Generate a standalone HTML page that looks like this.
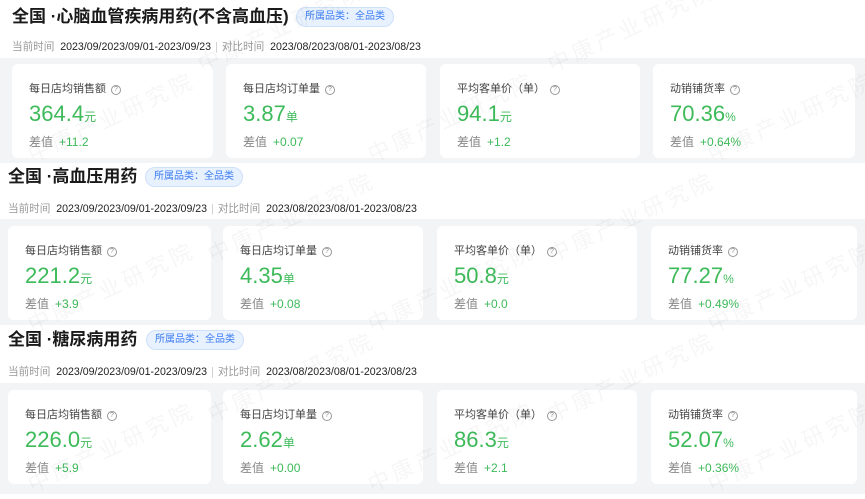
<!DOCTYPE html>
<html><head><meta charset="utf-8"><style>
*{margin:0;padding:0;box-sizing:border-box}
body{width:865px;height:494px;overflow:hidden;background:#fff;font-family:"Liberation Sans","Noto Sans CJK SC",sans-serif;position:relative}
.a{position:absolute;white-space:nowrap}
.title{font-size:17px;font-weight:bold;color:#1a1a1a;line-height:22px}
.badge{font-size:10px;color:#3b7cf0;background:#e8f1fe;border:1px solid #cfe0fb;border-radius:11px;height:20px;line-height:18px;padding:0 8px}
.date{font-size:10.6px;color:#222;line-height:14px}
.date span{color:#999}
.date i{font-style:normal;color:#ccc;margin:0 4px}
.gray{position:absolute;left:0;width:865px;background:#f3f4f6}
.card{position:absolute;background:#fff;border-radius:6px;height:94px}
.lab{position:absolute;left:17px;top:16px;font-size:11px;color:#444}
.q{display:inline-block;width:10px;height:10px;border:1px solid #999;border-radius:50%;font-size:7px;line-height:8px;text-align:center;color:#888;margin-left:5px;vertical-align:1px}
.val{position:absolute;left:17px;top:37px;font-size:22px;color:#3dba5a;line-height:26px}
.val small{font-size:12px}
.dif{position:absolute;left:17px;top:69px;font-size:12px;color:#888}
.dif b{font-weight:normal;color:#3dba5a;margin-left:6px}
.wm{position:absolute;font-size:22px;color:rgba(0,0,0,0.035);transform:rotate(-25deg);letter-spacing:4px;white-space:nowrap}
</style></head><body>

<div class="gray" style="top:58px;height:105px"></div>
<div class="gray" style="top:219px;height:106px"></div>
<div class="gray" style="top:383px;height:111px"></div>

<div class="a title" style="left:12px;top:6px">全国 ·心脑血管疾病用药(不含高血压)</div>
<div class="a badge" style="left:296px;top:7px">所属品类：全品类</div>
<div class="a date" style="left:12px;top:40px"><span>当前时间</span>&nbsp; 2023/09/2023/09/01-2023/09/23<i>|</i><span>对比时间</span>&nbsp; 2023/08/2023/08/01-2023/08/23</div>
<div class="card" style="left:12px;top:64px;width:201px"><div class="lab">每日店均销售额<span class="q">?</span></div><div class="val">364.4<small>元</small></div><div class="dif">差值<b>+11.2</b></div></div>
<div class="card" style="left:226px;top:64px;width:200px"><div class="lab">每日店均订单量<span class="q">?</span></div><div class="val">3.87<small>单</small></div><div class="dif">差值<b>+0.07</b></div></div>
<div class="card" style="left:440px;top:64px;width:200px"><div class="lab">平均客单价（单）<span class="q">?</span></div><div class="val">94.1<small>元</small></div><div class="dif">差值<b>+1.2</b></div></div>
<div class="card" style="left:653px;top:64px;width:202px"><div class="lab">动销铺货率<span class="q">?</span></div><div class="val">70.36<small>%</small></div><div class="dif">差值<b>+0.64%</b></div></div>

<div class="a title" style="left:8px;top:166px">全国 ·高血压用药</div>
<div class="a badge" style="left:145px;top:167px">所属品类：全品类</div>
<div class="a date" style="left:8px;top:202px"><span>当前时间</span>&nbsp; 2023/09/2023/09/01-2023/09/23<i>|</i><span>对比时间</span>&nbsp; 2023/08/2023/08/01-2023/08/23</div>
<div class="card" style="left:8px;top:226px;width:203px"><div class="lab">每日店均销售额<span class="q">?</span></div><div class="val">221.2<small>元</small></div><div class="dif">差值<b>+3.9</b></div></div>
<div class="card" style="left:223px;top:226px;width:200px"><div class="lab">每日店均订单量<span class="q">?</span></div><div class="val">4.35<small>单</small></div><div class="dif">差值<b>+0.08</b></div></div>
<div class="card" style="left:437px;top:226px;width:200px"><div class="lab">平均客单价（单）<span class="q">?</span></div><div class="val">50.8<small>元</small></div><div class="dif">差值<b>+0.0</b></div></div>
<div class="card" style="left:651px;top:226px;width:206px"><div class="lab">动销铺货率<span class="q">?</span></div><div class="val">77.27<small>%</small></div><div class="dif">差值<b>+0.49%</b></div></div>

<div class="a title" style="left:8px;top:329px">全国 ·糖尿病用药</div>
<div class="a badge" style="left:146px;top:330px">所属品类：全品类</div>
<div class="a date" style="left:8px;top:365px"><span>当前时间</span>&nbsp; 2023/09/2023/09/01-2023/09/23<i>|</i><span>对比时间</span>&nbsp; 2023/08/2023/08/01-2023/08/23</div>
<div class="card" style="left:8px;top:390px;width:203px"><div class="lab">每日店均销售额<span class="q">?</span></div><div class="val">226.0<small>元</small></div><div class="dif">差值<b>+5.9</b></div></div>
<div class="card" style="left:223px;top:390px;width:200px"><div class="lab">每日店均订单量<span class="q">?</span></div><div class="val">2.62<small>单</small></div><div class="dif">差值<b>+0.00</b></div></div>
<div class="card" style="left:437px;top:390px;width:200px"><div class="lab">平均客单价（单）<span class="q">?</span></div><div class="val">86.3<small>元</small></div><div class="dif">差值<b>+2.1</b></div></div>
<div class="card" style="left:651px;top:390px;width:206px"><div class="lab">动销铺货率<span class="q">?</span></div><div class="val">52.07<small>%</small></div><div class="dif">差值<b>+0.36%</b></div></div>

<div class="wm" style="left:20px;top:100px">中康产业研究院</div>
<div class="wm" style="left:190px;top:10px">中康产业研究院</div>
<div class="wm" style="left:360px;top:100px">中康产业研究院</div>
<div class="wm" style="left:540px;top:10px">中康产业研究院</div>
<div class="wm" style="left:700px;top:100px">中康产业研究院</div>
<div class="wm" style="left:20px;top:270px">中康产业研究院</div>
<div class="wm" style="left:200px;top:200px">中康产业研究院</div>
<div class="wm" style="left:360px;top:270px">中康产业研究院</div>
<div class="wm" style="left:540px;top:200px">中康产业研究院</div>
<div class="wm" style="left:700px;top:270px">中康产业研究院</div>
<div class="wm" style="left:20px;top:430px">中康产业研究院</div>
<div class="wm" style="left:200px;top:360px">中康产业研究院</div>
<div class="wm" style="left:360px;top:430px">中康产业研究院</div>
<div class="wm" style="left:540px;top:360px">中康产业研究院</div>
<div class="wm" style="left:700px;top:430px">中康产业研究院</div>
</body></html>
